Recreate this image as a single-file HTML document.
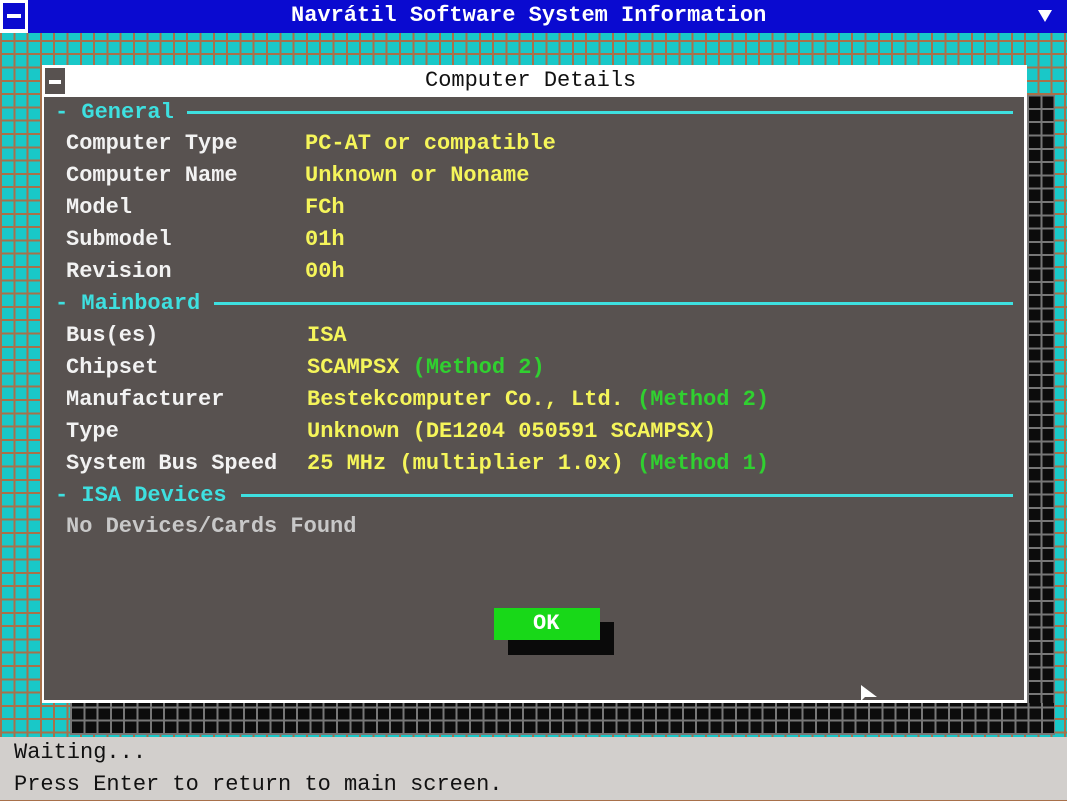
<!DOCTYPE html>
<html><head><meta charset="utf-8"><style>
*{margin:0;padding:0;box-sizing:border-box}
body{width:1067px;height:800px;overflow:hidden;position:relative;font-family:"Liberation Mono",monospace;
background-color:#19c8c8;
background-image:repeating-linear-gradient(90deg,#a8704a 0 2px,transparent 2px 13.3px),repeating-linear-gradient(0deg,#a8704a 0 2px,transparent 2px 13.3px);}
.t{position:absolute;white-space:pre;font-size:22px;line-height:32px;font-weight:bold}
#top{position:absolute;left:0;top:0;width:1067px;height:33px;background:#0a0ad0;color:#fff}
#top .box{position:absolute;left:0;top:0;width:28px;height:33px;background:#fff}
#top .box i{position:absolute;left:3px;top:3px;width:22px;height:26px;background:#0a0ad0}
#top .box i:after{content:"";position:absolute;left:4px;top:11px;width:14px;height:4px;background:#fff}
.shadow{position:absolute;background-color:#0c0c0c;background-image:repeating-linear-gradient(90deg,#777 0 2px,transparent 2px 13.3px),repeating-linear-gradient(0deg,#777 0 2px,transparent 2px 13.3px)}
#dlg{position:absolute;left:42px;top:65px;width:985px;height:638px;background:#fff}
#body{position:absolute;left:44px;top:97px;width:980px;height:603px;background:#585250}
#dlg .b{position:absolute;left:3px;top:3px;width:20px;height:26px;background:#585250}
#dlg .b:after{content:"";position:absolute;left:4px;top:12px;width:12px;height:4px;background:#fff}
.w{color:#f2f2f2}.y{color:#f5f55a}.g{color:#30d030}.c{color:#3ee0e0}.gr{color:#c8c8c8}
.hl{position:absolute;height:3px;background:#3ee0e0}
#status{position:absolute;left:0;top:737px;width:1067px;height:63px;background:#d2cfcc;color:#111}
</style></head><body>
<div id="top"><div class="box"><i></i></div>
<div class="t" style="left:291px;top:0px;color:#fff">Navrátil Software System Information</div>
<div style="position:absolute;left:1038px;top:10px;width:0;height:0;border-left:7px solid transparent;border-right:7px solid transparent;border-top:12px solid #fff"></div></div>
<div class="shadow" style="left:1027px;top:95px;width:28px;height:640px"></div>
<div class="shadow" style="left:70px;top:703px;width:985px;height:32px"></div>
<div id="dlg"><div class="b"></div>
<div class="t" style="left:383px;top:0px;color:#111;font-weight:normal">Computer Details</div></div>
<div id="body"></div>
<div class="t c" style="left:55px;top:97px">- General</div><div class="hl" style="left:187px;top:111px;width:826px"></div>
<div class="t w" style="left:66px;top:128px">Computer Type
Computer Name
Model
Submodel
Revision</div>
<div class="t y" style="left:305px;top:128px">PC-AT or compatible
Unknown or Noname
FCh
01h
00h</div>
<div class="t c" style="left:55px;top:288px">- Mainboard</div><div class="hl" style="left:214px;top:302px;width:799px"></div>
<div class="t w" style="left:66px;top:320px">Bus(es)
Chipset
Manufacturer
Type
System Bus Speed</div>
<div class="t y" style="left:307px;top:320px">ISA
SCAMPSX <span class="g">(Method 2)</span>
Bestekcomputer Co., Ltd. <span class="g">(Method 2)</span>
Unknown (DE1204 050591 SCAMPSX)
25 MHz (multiplier 1.0x) <span class="g">(Method 1)</span></div>
<div class="t c" style="left:55px;top:480px">- ISA Devices</div><div class="hl" style="left:241px;top:494px;width:772px"></div>
<div class="t gr" style="left:66px;top:511px">No Devices/Cards Found</div>
<div style="position:absolute;left:508px;top:622px;width:106px;height:33px;background:#0a0a0a"></div>
<div style="position:absolute;left:494px;top:608px;width:106px;height:32px;background:#18d818"></div>
<div class="t" style="left:533px;top:608px;color:#fff">OK</div>
<svg style="position:absolute;left:860px;top:684px" width="18" height="20"><path d="M1 1 L1 17 L5 13 L17 13 Z" fill="#fff"/></svg>
<div id="status"><div class="t" style="left:14px;top:0px;color:#111;font-weight:normal">Waiting...
Press Enter to return to main screen.</div></div>
</body></html>
